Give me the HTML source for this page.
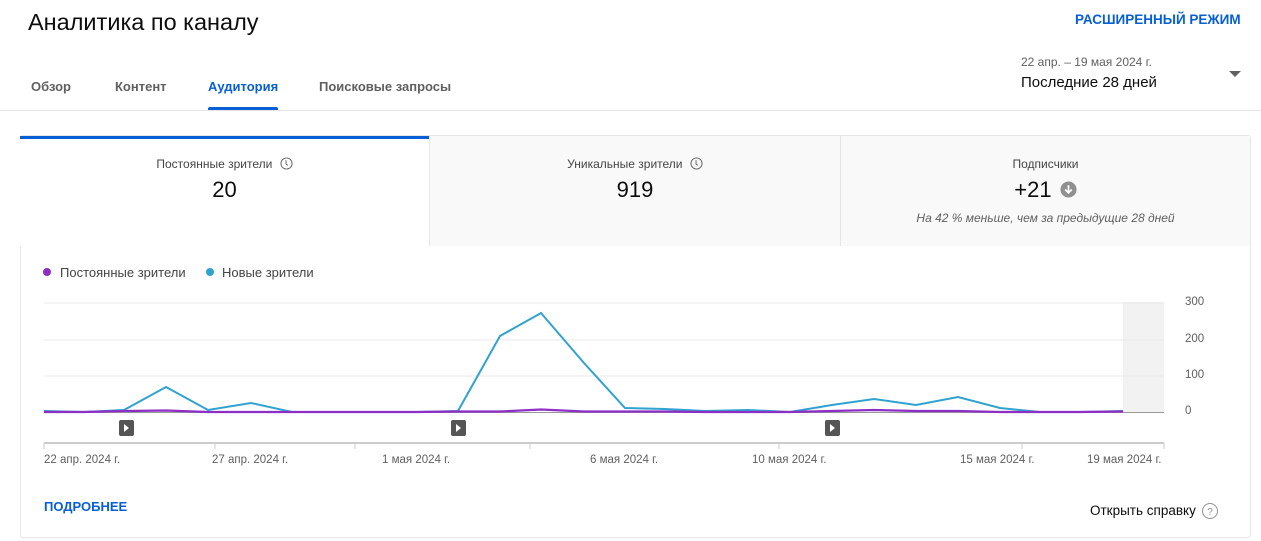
<!DOCTYPE html>
<html><head><meta charset="utf-8"><style>
*{margin:0;padding:0;box-sizing:border-box}
body{width:1261px;height:541px;background:#fff;font-family:"Liberation Sans",sans-serif;color:#0d0d0d;position:relative;overflow:hidden}
.a{position:absolute;white-space:nowrap}
.tab{font-size:13px;color:#606060;font-weight:bold;top:79px}
.mt{position:absolute;top:136px;height:110px;text-align:center}
.lab{font-size:12px;color:#444;margin-top:21px}
.val{font-size:22px;margin-top:6px;color:#0d0d0d}
.ax{font-size:11.5px;color:#606060;position:absolute}
</style></head><body>
<div class="a" style="left:28px;top:9px;font-size:23.5px;color:#0d0d0d">Аналитика по каналу</div>
<div class="a" style="left:1075px;top:12px;font-size:13.5px;font-weight:bold;color:#065fd4">РАСШИРЕННЫЙ РЕЖИМ</div>
<div class="a tab" style="left:31px">Обзор</div>
<div class="a tab" style="left:115px">Контент</div>
<div class="a tab" style="left:208px;color:#065fd4">Аудитория</div>
<div class="a" style="left:208px;top:107px;width:70px;height:3px;background:#065fd4;border-radius:2px 2px 0 0"></div>
<div class="a tab" style="left:319px">Поисковые запросы</div>
<div class="a" style="left:1021px;top:55px;font-size:12px;color:#606060">22 апр. – 19 мая 2024 г.</div>
<div class="a" style="left:1021px;top:74px;font-size:15px;color:#0d0d0d">Последние 28 дней</div>
<div class="a" style="left:1229px;top:71px;width:0;height:0;border-left:6px solid transparent;border-right:6px solid transparent;border-top:6px solid #606060"></div>
<div class="a" style="left:0;top:110px;width:1261px;height:1px;background:#e5e5e5"></div>

<div class="a" style="left:20px;top:135px;width:1231px;height:403px;border:1px solid #e5e5e5;border-radius:3px"></div>
<div class="mt" style="left:20px;width:409px;background:#fff;border-top:3px solid #065fd4">
<div class="lab" style="margin-top:18px">Постоянные зрители <svg width="13" height="13" viewBox="0 0 14 14" style="vertical-align:-2px;margin-left:4px"><circle cx="7" cy="7" r="6" fill="none" stroke="#606060" stroke-width="1"/><path d="M6.5 3.5v4l2 1.5" fill="none" stroke="#606060" stroke-width="1"/></svg></div>
<div class="val">20</div></div>
<div class="mt" style="left:429px;width:411px;background:#f9f9f9;border-left:1px solid #e5e5e5">
<div class="lab">Уникальные зрители <svg width="13" height="13" viewBox="0 0 14 14" style="vertical-align:-2px;margin-left:4px"><circle cx="7" cy="7" r="6" fill="none" stroke="#606060" stroke-width="1"/><path d="M6.5 3.5v4l2 1.5" fill="none" stroke="#606060" stroke-width="1"/></svg></div>
<div class="val">919</div></div>
<div class="mt" style="left:840px;width:410px;background:#f9f9f9;border-left:1px solid #e5e5e5">
<div class="lab">Подписчики</div>
<div class="val">+21 <svg width="17" height="17" viewBox="0 0 18 18" style="vertical-align:-1px;margin-left:2px"><circle cx="9" cy="9" r="8.5" fill="#909090"/><path d="M9 4.5v8M5.5 9l3.5 3.5 3.5-3.5" fill="none" stroke="#fff" stroke-width="1.8"/></svg></div>
<div style="font-size:12px;font-style:italic;color:#606060;margin-top:8px">На 42 % меньше, чем за предыдущие 28 дней</div></div>

<div class="a" style="left:43px;top:268px;width:8px;height:8px;border-radius:50%;background:#8d2ec4"></div>
<div class="a" style="left:60px;top:265px;font-size:13px;color:#444">Постоянные зрители</div>
<div class="a" style="left:206px;top:268px;width:8px;height:8px;border-radius:50%;background:#30a2d0"></div>
<div class="a" style="left:222px;top:265px;font-size:13px;color:#444">Новые зрители</div>

<svg class="a" style="left:0;top:0" width="1261" height="541">
<rect x="1123" y="302" width="41" height="111" fill="#f2f2f2"/>
<g stroke="#e8e8e8" stroke-width="1"><line x1="44" y1="303" x2="1164" y2="303"/><line x1="44" y1="340" x2="1164" y2="340"/><line x1="44" y1="376" x2="1164" y2="376"/></g>
<line x1="44" y1="412.5" x2="1164" y2="412.5" stroke="#999"/>
<line x1="44" y1="443" x2="1164" y2="443" stroke="#ccc" stroke-width="2"/>
<g stroke="#ccc"><line x1="44" y1="443" x2="44" y2="449"/><line x1="215" y1="443" x2="215" y2="449"/><line x1="355" y1="443" x2="355" y2="449"/><line x1="530" y1="443" x2="530" y2="449"/><line x1="779" y1="443" x2="779" y2="449"/><line x1="1022" y1="443" x2="1022" y2="449"/><line x1="1164" y1="443" x2="1164" y2="449"/></g>
<polyline fill="none" stroke="#30a2d0" stroke-width="2" points="44,411 84,412 124,410 166,387 208,410 251,403 292,412 334,412 375,412 417,412 458,411 500,336 541,313 584,363 625,408 665,409 705,411 748,410 790,412 832,405 874,399 916,405 958,397 1000,408 1040,412 1080,412 1123,411"/>
<polyline fill="none" stroke="#8d2ec4" stroke-width="2.2" points="44,412 84,412 124,411 166,410.5 208,412 251,412 292,412 334,412 375,412 417,412 458,411.5 500,411.5 541,409.5 584,411.5 625,411.5 665,411.5 705,412 748,412 790,412 832,411 874,410 916,411 958,411 1000,412 1040,412 1080,412 1123,411.5"/>
<g fill="#555"><rect x="119" y="420" width="15" height="16" rx="2"/><rect x="451" y="420" width="15" height="16" rx="2"/><rect x="825" y="420" width="15" height="16" rx="2"/></g>
<g fill="#fff"><path d="M124 424l5 4-5 4z"/><path d="M456 424l5 4-5 4z"/><path d="M830 424l5 4-5 4z"/></g>
<circle cx="1210" cy="511" r="7.5" fill="none" stroke="#909090"/>
<text x="1210" y="515" font-size="10" fill="#909090" text-anchor="middle" font-family="Liberation Sans">?</text>
</svg>
<div class="ax" style="left:1185px;top:296px">300</div>
<div class="ax" style="left:1185px;top:333px">200</div>
<div class="ax" style="left:1185px;top:369px">100</div>
<div class="ax" style="left:1185px;top:405px">0</div>
<div class="ax" style="left:44px;top:454px">22 апр. 2024 г.</div>
<div class="ax" style="left:212px;top:454px">27 апр. 2024 г.</div>
<div class="ax" style="left:382px;top:454px">1 мая 2024 г.</div>
<div class="ax" style="left:590px;top:454px">6 мая 2024 г.</div>
<div class="ax" style="left:752px;top:454px">10 мая 2024 г.</div>
<div class="ax" style="left:960px;top:454px">15 мая 2024 г.</div>
<div class="ax" style="left:1087px;top:454px">19 мая 2024 г.</div>
<div class="a" style="left:44px;top:499px;font-size:13px;font-weight:bold;color:#065fd4">ПОДРОБНЕЕ</div>
<div class="a" style="left:1090px;top:503px;font-size:13.5px;color:#0d0d0d">Открыть справку</div>
</body></html>
